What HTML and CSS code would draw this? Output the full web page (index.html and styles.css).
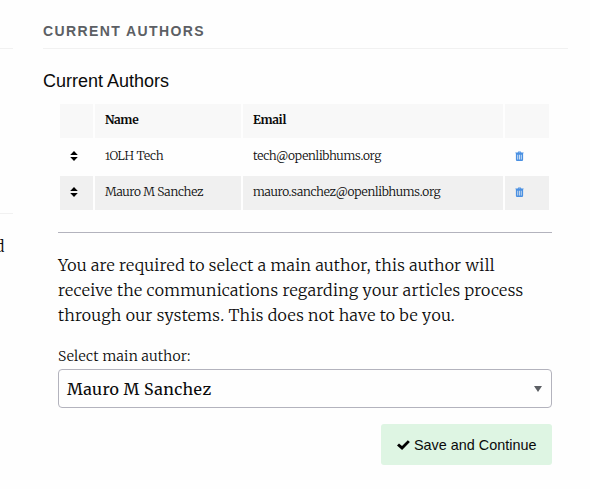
FILE: index.html
```html
<!DOCTYPE html>
<html lang="en">
<head>
<meta charset="utf-8">
<title>Current Authors</title>
<link rel="stylesheet" href="styles.css">
</head>
<body>
<svg width="0" height="0" class="defs" aria-hidden="true">
  <symbol id="sort" viewBox="0 0 8 10"><path d="M4 0 7.8 4H.2ZM4 10 .2 6h7.6Z"/></symbol>
  <symbol id="trash" viewBox="0 0 10 11"><path fill-rule="evenodd" d="M3 1.5 3.6.5h2.8l.6 1h2.6v1H9V9.6Q9 11 7.7 11H2.3Q1 11 1 9.6V2.5H.4v-1ZM4 1.5h2l-.2-.3H4.2ZM2.7 4v5.5h.8V4ZM4.6 4v5.5h.8V4ZM6.5 4v5.5h.8V4Z"/></symbol>
</svg>
<div class="layout">
  <aside class="side">
    <div class="side-head"></div>
    <div class="side-block"></div>
    <p class="side-text">d</p>
  </aside>
  <main class="main">
    <h2 class="title">CURRENT AUTHORS</h2>
    <h3 class="subtitle">Current Authors</h3>
    <div class="content">
      <table class="authors">
        <colgroup><col class="c-sort"><col class="c-name"><col class="c-email"><col class="c-del"></colgroup>
        <thead><tr><th></th><th>Name</th><th>Email</th><th></th></tr></thead>
        <tbody>
          <tr><td><svg class="sort"><use href="#sort"/></svg></td><td>1OLH Tech</td><td>tech@openlibhums.org</td><td><svg class="trash"><use href="#trash"/></svg></td></tr>
          <tr><td><svg class="sort"><use href="#sort"/></svg></td><td>Mauro M Sanchez</td><td>mauro.sanchez@openlibhums.org</td><td><svg class="trash"><use href="#trash"/></svg></td></tr>
        </tbody>
      </table>
      <hr class="rule">
      <p class="note">You are required to select a main author, this author will<br>receive the communications regarding your articles process<br>through our systems. This does not have to be you.</p>
      <div class="label"><span>Select main author:</span></div>
      <div class="select"><span>Mauro M Sanchez</span><svg class="caret" viewBox="0 0 8 6"><path d="M0 0h8L4 6Z"/></svg></div>
      <button class="save"><svg class="check" viewBox="0 0 13 10"><path d="M0 5.5 2 3.4 5 6.1 10.8.2 12.9 2.1 5.1 10Z"/></svg>Save and Continue</button>
    </div>
  </main>
</div>
</body>
</html>
```
FILE: styles.css
```css
* { box-sizing: border-box; }
body { margin: 0; background: #fefefe; color: #0a0a0a; font-family: Merriweather, "DejaVu Serif Condensed", "DejaVu Serif", serif; font-weight: 300; font-variant-numeric: oldstyle-nums; overflow: hidden; }
.defs { display: block; }
.layout { display: grid; grid-template-columns: 13px 525px; column-gap: 30px; height: 489px; }
.side-head { height: 49px; border-bottom: 1px solid #f1f1f1; }
.side-block { height: 165px; border-bottom: 1px solid #f1f1f1; }
.side-text { margin: 19px 0 0 -5px; font-size: 16px; line-height: 26px; }
.title { margin: 0; height: 49px; border-bottom: 1px solid #f1f1f1; font: bold 14px/20px "Liberation Sans", sans-serif; padding: 21px 0 0; letter-spacing: 1.4px; color: #5c5f64; }
.subtitle { margin: 19px 0 0; font: 18px/26px "Liberation Sans", sans-serif; }
.content { width: 494px; margin: 8px 0 0 15px; display: flex; flex-direction: column; }
.authors { width: 493px; table-layout: fixed; border-collapse: separate; border-spacing: 2px; font-size: 12px; white-space: nowrap; }
.c-sort { width: 33px; } .c-name { width: 146px; } .c-email { width: 260px; } .c-del { width: 44px; }
.authors th, .authors td { height: 34px; padding: 0 10px 2px; text-align: left; vertical-align: middle; line-height: 20px; }
.authors th { background: #f8f8f8; letter-spacing: -.3px; }
.authors td { letter-spacing: -.24px; }
.authors tr:nth-child(2) td { background: #f0f0f0; }
.authors svg { display: block; }
.sort { width: 7px; height: 10px; overflow: visible; }
.trash { width: 9px; height: 10px; fill: #4a90e2; }
.rule { width: 100%; height: 1px; border: 0; background: #b3b3bd; margin: 20px 0; }
.note { margin: 0; font-size: 16px; line-height: 25px; letter-spacing: .29px; white-space: nowrap; }
.label { margin-top: 18px; font-size: 14px; line-height: 21px; letter-spacing: .23px; }
.select { margin-top: 2px; height: 39px; border: 1px solid #b3b3bd; border-radius: 4px; padding: 0 9px 0 8px; display: flex; align-items: center; justify-content: space-between; font-size: 16px; font-weight: 400; letter-spacing: .43px; }
.caret { width: 8px; height: 6px; fill: #5c5f64; }
.save { align-self: flex-end; margin-top: 16px; width: 171px; height: 41px; padding: 0 0 0 16px; display: flex; align-items: center; gap: 4px; border: 0; border-radius: 3px; background: #def5e3; color: #0a0a0a; font: 14.4px "Liberation Sans", sans-serif; white-space: nowrap; }
.check { width: 13px; height: 10px; flex: none; }
.sort { width: 8px; }
```
